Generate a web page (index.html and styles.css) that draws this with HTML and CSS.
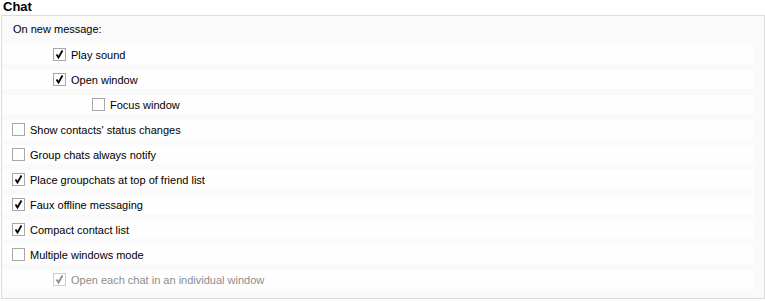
FILE: index.html
```html
<!DOCTYPE html>
<html>
<head>
<meta charset="utf-8">
<link rel="stylesheet" href="styles.css">
</head>
<body>
<div class="title">Chat</div>
<div class="group">
  <div class="label">On new message:</div>
  <div class="row lvl1"><span class="cb on"><svg viewBox="0 0 13 13"><path d="M3.5 6.5 L5.5 9.5 L9.5 2.5" /></svg></span><span class="txt">Play sound</span></div>
  <div class="row lvl1"><span class="cb on"><svg viewBox="0 0 13 13"><path d="M3.5 6.5 L5.5 9.5 L9.5 2.5" /></svg></span><span class="txt">Open window</span></div>
  <div class="row lvl2"><span class="cb"></span><span class="txt">Focus window</span></div>
  <div class="row"><span class="cb"></span><span class="txt">Show contacts' status changes</span></div>
  <div class="row"><span class="cb"></span><span class="txt">Group chats always notify</span></div>
  <div class="row"><span class="cb on"><svg viewBox="0 0 13 13"><path d="M3.5 6.5 L5.5 9.5 L9.5 2.5" /></svg></span><span class="txt">Place groupchats at top of friend list</span></div>
  <div class="row"><span class="cb on"><svg viewBox="0 0 13 13"><path d="M3.5 6.5 L5.5 9.5 L9.5 2.5" /></svg></span><span class="txt">Faux offline messaging</span></div>
  <div class="row"><span class="cb on"><svg viewBox="0 0 13 13"><path d="M3.5 6.5 L5.5 9.5 L9.5 2.5" /></svg></span><span class="txt">Compact contact list</span></div>
  <div class="row"><span class="cb"></span><span class="txt">Multiple windows mode</span></div>
  <div class="row lvl1 disabled"><span class="cb on"><svg viewBox="0 0 13 13"><path d="M3.5 6.5 L5.5 9.5 L9.5 2.5" /></svg></span><span class="txt">Open each chat in an individual window</span></div>
</div>
</body>
</html>
```
FILE: styles.css
```css
html, body {
  margin: 0;
  padding: 0;
  background: #ffffff;
}
body {
  font-family: "Liberation Sans", Arial, sans-serif;
  font-size: 11px;
  color: #000000;
  width: 765px;
  height: 301px;
  overflow: hidden;
}
.title {
  font-weight: bold;
  font-size: 13px;
  height: 15px;
  line-height: 14px;
  padding-left: 3px;
}
.group {
  margin-left: 1px;
  width: 762px;
  border: 1px solid #dcdcdc;
  background: #fafafa;
  padding: 4px 0 9px 0;
  display: flex;
  flex-direction: column;
  gap: 6px;
}
.label {
  height: 19px;
  line-height: 19px;
  padding-left: 11px;
}
.row {
  height: 19px;
  margin-left: 1px;
  margin-right: 10px;
  background: #fefefe;
  display: flex;
  align-items: center;
  padding-left: 9px;
}
.row.lvl1 { padding-left: 50px; }
.row.lvl2 { padding-left: 89px; }
.cb {
  width: 11px;
  height: 11px;
  border: 1px solid #a8a8a8;
  background: #ffffff;
  flex: none;
  display: block;
  position: relative;
}
.cb svg {
  position: absolute;
  left: -1px;
  top: -1px;
  width: 13px;
  height: 13px;
  fill: none;
  stroke: #000000;
  stroke-width: 1.8;
}
.txt {
  margin-left: 5px;
  white-space: nowrap;
}
.disabled .txt { color: #8d8d8d; }
.disabled .cb { border-color: #cfcfcf; }
.disabled .cb svg { stroke: #8d8d8d; }
```
